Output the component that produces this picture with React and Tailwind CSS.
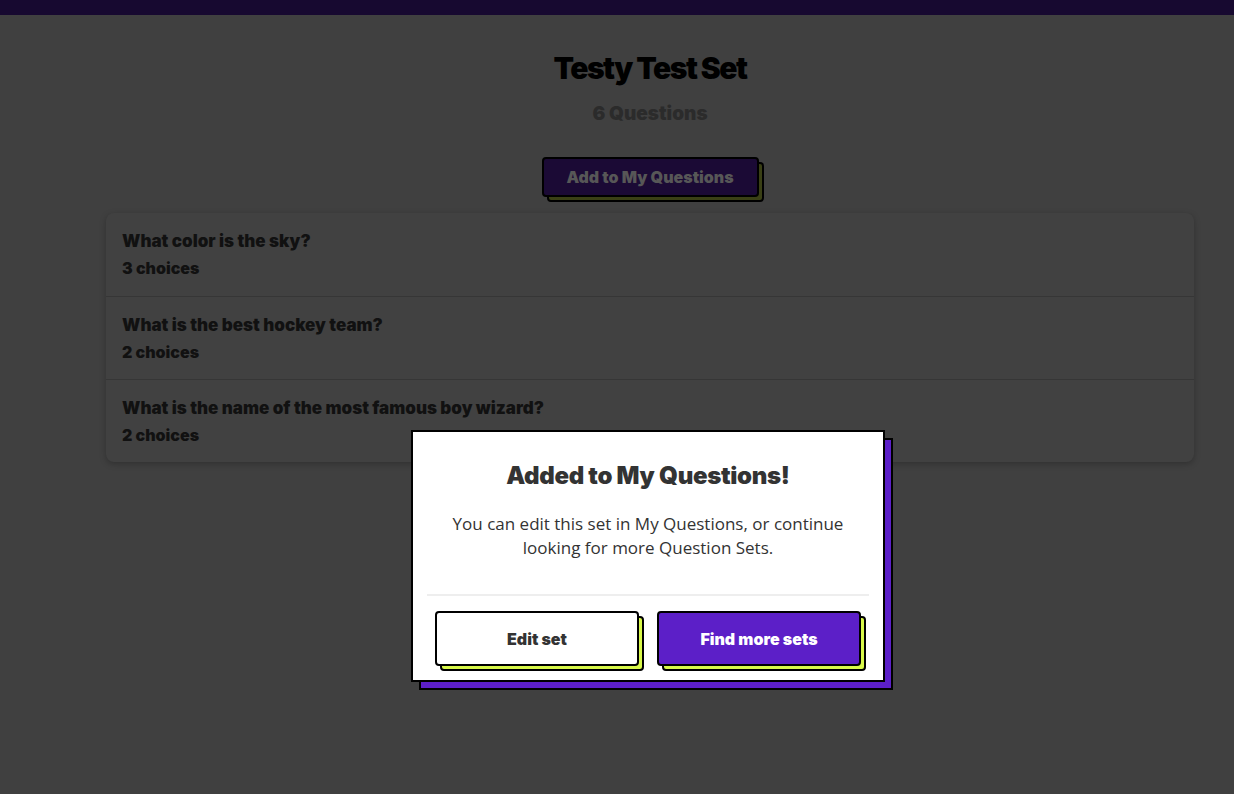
import React from 'react';

const questions = [
  { title: 'What color is the sky?', choices: 3 },
  { title: 'What is the best hockey team?', choices: 2 },
  { title: 'What is the name of the most famous boy wizard?', choices: 2 },
];

const display = { fontFamily: 'Inter, Lato, sans-serif' };
const body = { fontFamily: '"Open Sans", "Noto Sans", sans-serif' };

const ShadowButton = ({ children, className, shadow }) => (
  <div className="relative w-full h-full">
    <div className={`absolute left-[5px] top-[5px] w-full h-full rounded-[4px] border-2 border-black ${shadow}`}></div>
    <button className={`relative w-full h-full rounded-[4px] border-2 border-black font-black ${className}`} style={display}>
      {children}
    </button>
  </div>
);

export default function App() {
  return (
    <div className="min-h-[794px] bg-[#404040] relative">
      {/* top bar */}
      <div className="h-[15px] bg-[#170930]"></div>

      {/* page (under backdrop) */}
      <div className="flex flex-col items-center pt-[33px] pl-[66px]">
        <h1 className="text-[30px] leading-[40px] font-black tracking-[-1.5px] text-black" style={display}>Testy Test Set</h1>
        <p className="mt-[12px] text-[19px] leading-[28px] font-black text-[#2b2b2b]" style={display}>6 Questions</p>

        <div className="mt-[29px] w-[217px] h-[40px]">
          <ShadowButton className="bg-[#1b0a35] text-[#575757] text-[16px]" shadow="bg-[#3a4015]">
            Add to My Questions
          </ShadowButton>
        </div>

        <div className="mt-[16px] w-[1088px] rounded-[8px] bg-[#414141] shadow-[0_2px_6px_rgba(0,0,0,0.25)] overflow-hidden">
          {questions.map((q, i) => (
            <div key={i} className={`h-[83px] px-[16px] pt-[16px] ${i > 0 ? 'border-t border-[#363636]' : ''}`} style={display}>
              <div className="text-[17px] leading-[24px] font-black text-[#111]">{q.title}</div>
              <div className="mt-[4px] text-[16px] leading-[22px] font-black text-[#111]">{q.choices} choices</div>
            </div>
          ))}
        </div>
      </div>

      {/* modal */}
      <div className="absolute left-[411px] top-[430px] w-[474px]">
        <div className="absolute left-[8px] top-[8px] w-full h-full bg-[#5c1fc8] border-2 border-black"></div>
        <div className="relative bg-white border-2 border-black px-[14px] pt-[28px] pb-[14px]">
          <h2 className="text-center text-[24px] leading-[32px] font-black tracking-[-0.3px] text-[#333]" style={display}>Added to My Questions!</h2>
          <p className="mt-[20px] text-center text-[17px] leading-[24px] text-[#333] px-[10px]" style={body}>
            You can edit this set in My Questions, or continue looking for more Question Sets.
          </p>
          <div className="mt-[34px] h-[2px] bg-[#eeeeee]"></div>
          <div className="mt-[15px] px-[8px] flex gap-[18px]">
            <div className="flex-1 h-[55px]">
              <ShadowButton className="bg-white text-[#333] text-[16px]" shadow="bg-[#d9f94a]">Edit set</ShadowButton>
            </div>
            <div className="flex-1 h-[55px]">
              <ShadowButton className="bg-[#5c1fc8] text-white text-[16px]" shadow="bg-[#d9f94a]">Find more sets</ShadowButton>
            </div>
          </div>
        </div>
      </div>
    </div>
  );
}
